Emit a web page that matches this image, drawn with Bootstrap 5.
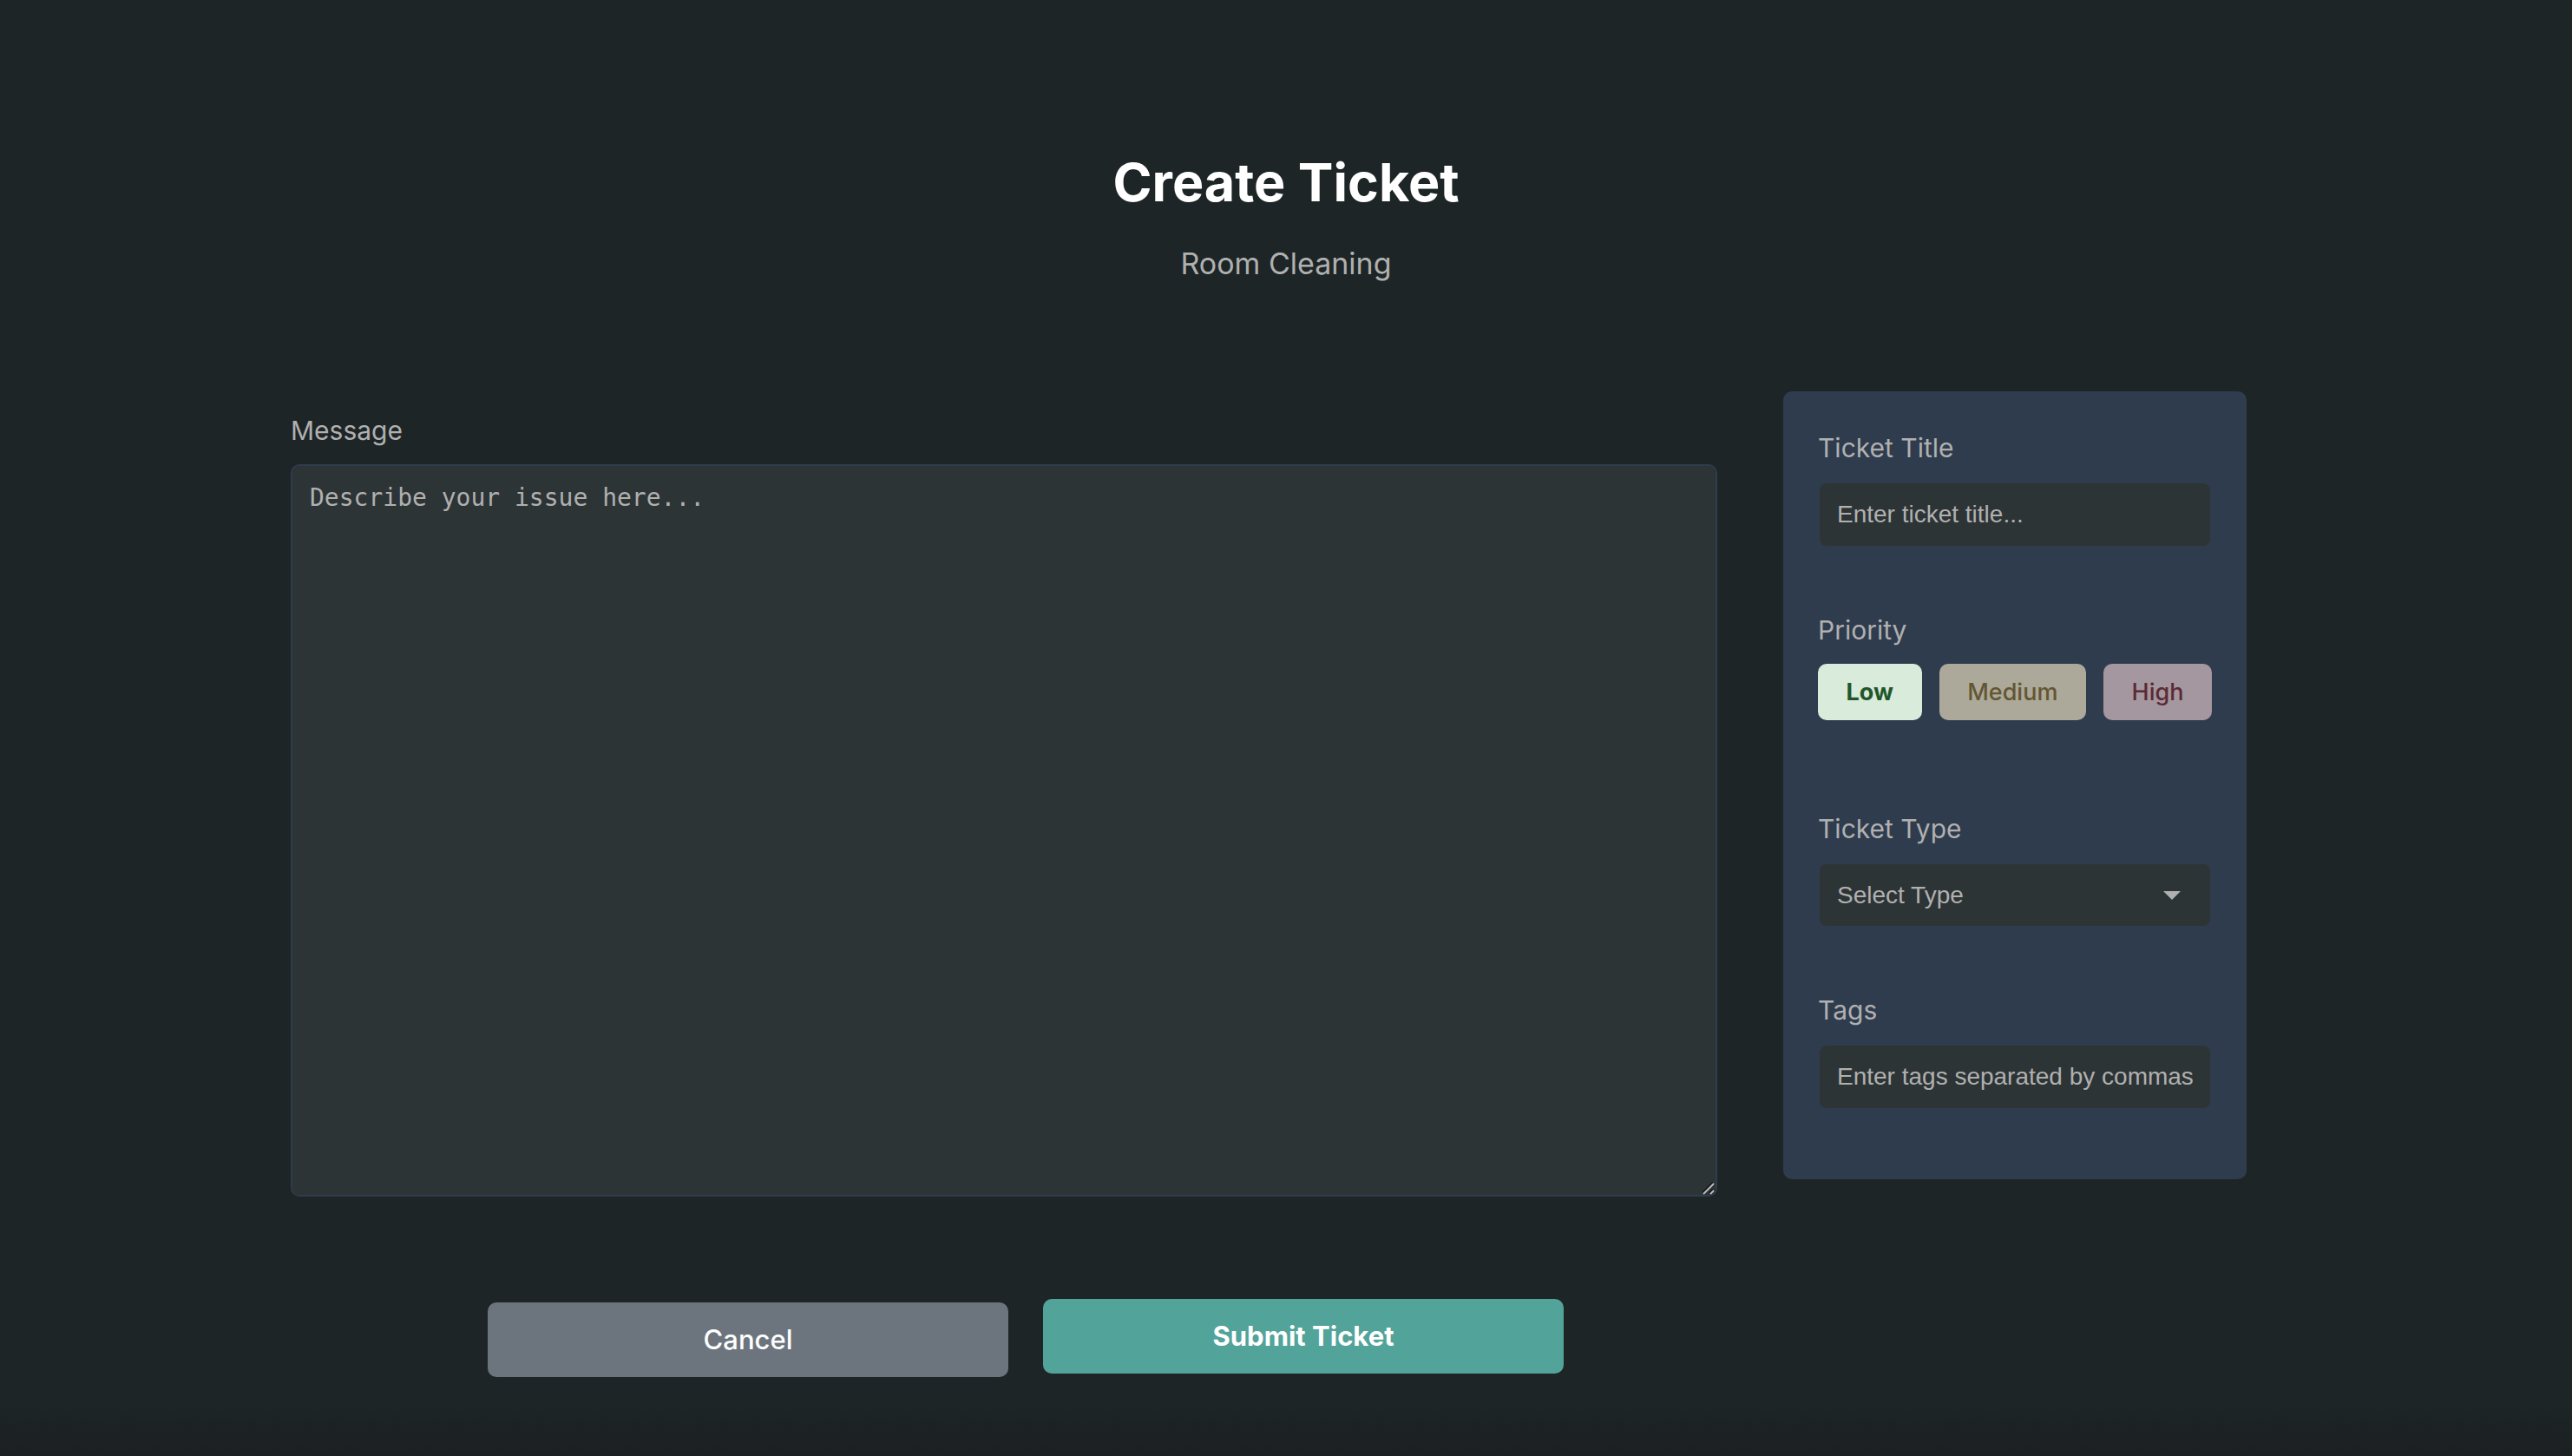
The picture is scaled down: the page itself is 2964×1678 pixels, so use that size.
<!DOCTYPE html>
<html lang="en">
<head>
<meta charset="utf-8">
<meta name="viewport" content="width=device-width, initial-scale=1">
<title>Create Ticket</title>
<link href="https://cdn.jsdelivr.net/npm/bootstrap@5.3.0/dist/css/bootstrap.min.css" rel="stylesheet">
<style>
  :root { --page: #1d2526; --field: #2d3436; --panel: #2f3c4e; --muted-text: #b0b0b0; }
  body {
    min-height: 100vh;
    background: linear-gradient(to bottom, transparent calc(100% - 60px), rgba(28, 28, 32, .6)) var(--page);
    color: var(--muted-text);
    font-family: Inter, "Liberation Sans", sans-serif;
    font-size: 30px;
    line-height: 40px;
  }
  .ticket-page { max-width: 2294px; padding-top: 170px; }
  .ticket-title { font-size: 61px; line-height: 80px; font-weight: 700; color: #fff; }
  .ticket-subtitle { font-size: 34px; line-height: 44px; margin-top: 32px; }
  .ticket-layout { gap: 76px; margin-top: 125px; padding-right: 40px; }
  .message-column { padding-top: 25px; }
  .ticket-label { display: block; margin: 0 0 19px; }
  .ticket-field, .ticket-field:focus {
    background-color: var(--field);
    border: 2px solid var(--panel);
    border-radius: 10px;
    color: var(--muted-text);
    font-family: "Liberation Sans", Arial, sans-serif;
    font-size: 28px;
    line-height: 32px;
    padding: 20px;
    box-shadow: none;
  }
  .ticket-field::placeholder { color: var(--muted-text); opacity: 1; }
  textarea.ticket-field, textarea.ticket-field:focus { height: 844px; font-family: "DejaVu Sans Mono", monospace; line-height: 34px; }
  textarea.ticket-field::-webkit-resizer {
    background: url("data:image/svg+xml,%3Csvg xmlns='http://www.w3.org/2000/svg' viewBox='0 0 15 15'%3E%3Cpath d='M0 13 12 1M8 13l4-4' stroke='%23111' stroke-width='2'/%3E%3Cpath d='M1 14 13 2M9 14l4-4' stroke='%23bbb' stroke-width='2'/%3E%3C/svg%3E") center / 15px 15px no-repeat;
  }
  select.ticket-field, select.ticket-field:focus {
    height: 75px;
    background-image: url("data:image/svg+xml,%3Csvg xmlns='http://www.w3.org/2000/svg' viewBox='0 0 20 10'%3E%3Cpath d='M0 0h20L10 10z' fill='%23b0b0b0'/%3E%3C/svg%3E");
    background-size: 20px 10px;
    background-position: right 34px center;
  }
  .ticket-panel { flex: 0 0 534px; background: var(--panel); border-radius: 10px; padding: 45px 40px 80px; }
  .panel-group { margin-bottom: 75px; }
  .panel-group:last-child { margin-bottom: 0; }
  .priority-group { margin-bottom: 105px; }
  .priority-list { gap: 20px; }
  .btn-priority { flex: 1 1 auto; border: 0; border-radius: 10px; font-size: 27px; line-height: 33px; font-weight: 500; padding: 16px 32px; }
  .btn-low, .btn-low:hover { background: #d9ebdb; color: #22562a; font-weight: 700; }
  .btn-medium, .btn-medium:hover { background: #aca99a; color: #635632; }
  .btn-high, .btn-high:hover { background: #a4979f; color: #5a2a35; }
  .ticket-actions { gap: 40px; margin-top: 118px; padding-left: 50px; }
  .btn-action { width: 600px; border: 0; border-radius: 10px; font-size: 31px; line-height: 40px; padding: 23px; }
  .btn-cancel, .btn-cancel:hover { background: #6c757d; color: #fff; font-weight: 500; margin-top: 4px; }
  .btn-submit, .btn-submit:hover { background: #52a399; color: #fff; font-weight: 700; margin-bottom: 4px; }
</style>
</head>
<body>
<main class="ticket-page container-fluid px-0">
  <header class="text-center">
    <h1 class="ticket-title mb-0">Create Ticket</h1>
    <p class="ticket-subtitle mb-0">Room Cleaning</p>
  </header>
  <form>
    <div class="ticket-layout d-flex align-items-start">
      <div class="message-column flex-grow-1">
        <label class="ticket-label" for="message">Message</label>
        <textarea class="form-control ticket-field" id="message" placeholder="Describe your issue here..."></textarea>
        <div class="ticket-actions d-flex justify-content-center">
          <button type="button" class="btn btn-action btn-cancel">Cancel</button>
          <button type="submit" class="btn btn-action btn-submit">Submit Ticket</button>
        </div>
      </div>
      <aside class="ticket-panel">
        <div class="panel-group">
          <label class="ticket-label" for="title">Ticket Title</label>
          <input class="form-control ticket-field" type="text" id="title" placeholder="Enter ticket title...">
        </div>
        <div class="panel-group priority-group" role="group" aria-labelledby="priority-label">
          <span class="ticket-label" id="priority-label">Priority</span>
          <div class="priority-list d-flex">
            <button type="button" class="btn btn-priority btn-low" aria-pressed="true">Low</button>
            <button type="button" class="btn btn-priority btn-medium" aria-pressed="false">Medium</button>
            <button type="button" class="btn btn-priority btn-high" aria-pressed="false">High</button>
          </div>
        </div>
        <div class="panel-group">
          <label class="ticket-label" for="type">Ticket Type</label>
          <select class="form-select ticket-field" id="type">
            <option>Select Type</option>
          </select>
        </div>
        <div class="panel-group">
          <label class="ticket-label" for="tags">Tags</label>
          <input class="form-control ticket-field" type="text" id="tags" placeholder="Enter tags separated by commas">
        </div>
      </aside>
    </div>
  </form>
</main>
<script src="https://cdn.jsdelivr.net/npm/bootstrap@5.3.0/dist/js/bootstrap.bundle.min.js"></script>
</body>
</html>
